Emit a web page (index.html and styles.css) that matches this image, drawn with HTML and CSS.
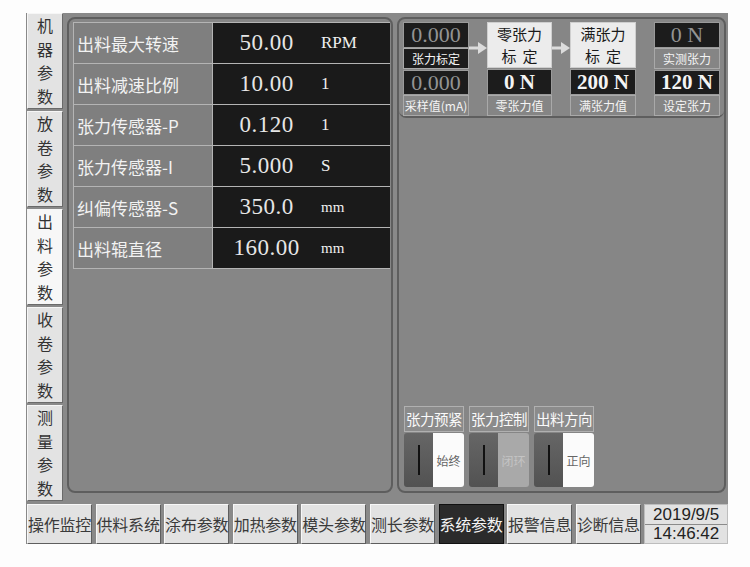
FILE: index.html
```html
<!DOCTYPE html>
<html>
<head>
<meta charset="utf-8">
<link rel="stylesheet" href="styles.css">
</head>
<body>
<div class="screen">
  <div class="main">
    <div class="side">
      <div class="vtab"><span>机</span><span>器</span><span>参</span><span>数</span></div>
      <div class="vtab"><span>放</span><span>卷</span><span>参</span><span>数</span></div>
      <div class="vtab active"><span>出</span><span>料</span><span>参</span><span>数</span></div>
      <div class="vtab"><span>收</span><span>卷</span><span>参</span><span>数</span></div>
      <div class="vtab"><span>测</span><span>量</span><span>参</span><span>数</span></div>
    </div>
    <div class="panels">
      <div class="panel left">
        <div class="ptable">
          <div class="lbl">出料最大转速</div><div class="val"><span class="num">50.00</span><span class="unit">RPM</span></div>
          <div class="lbl">出料减速比例</div><div class="val"><span class="num">10.00</span><span class="unit">1</span></div>
          <div class="lbl">张力传感器-P</div><div class="val"><span class="num">0.120</span><span class="unit">1</span></div>
          <div class="lbl">张力传感器-I</div><div class="val"><span class="num">5.000</span><span class="unit">S</span></div>
          <div class="lbl">纠偏传感器-S</div><div class="val"><span class="num">350.0</span><span class="unit small">mm</span></div>
          <div class="lbl">出料辊直径</div><div class="val"><span class="num">160.00</span><span class="unit small">mm</span></div>
        </div>
      </div>
      <div class="panel right">
        <div class="calib">
          <div class="col">
            <div class="box grey">0.000</div>
            <div class="tag dark">张力标定</div>
            <div class="box grey b2">0.000</div>
            <div class="tag">采样值(mA)</div>
          </div>
          <div class="arrow"><svg width="18" height="12" viewBox="0 0 18 12"><rect x="0" y="4.5" width="10" height="3" fill="#dcdcdc"/><polygon points="9,0 18,6 9,12" fill="#dcdcdc"/></svg></div>
          <div class="col">
            <div class="btn"><div>零张力</div><div class="sp">标定</div></div>
            <div class="box bold">0 N</div>
            <div class="tag">零张力值</div>
          </div>
          <div class="arrow"><svg width="18" height="12" viewBox="0 0 18 12"><rect x="0" y="4.5" width="10" height="3" fill="#dcdcdc"/><polygon points="9,0 18,6 9,12" fill="#dcdcdc"/></svg></div>
          <div class="col">
            <div class="btn"><div>满张力</div><div class="sp">标定</div></div>
            <div class="box bold">200 N</div>
            <div class="tag">满张力值</div>
          </div>
          <div class="spacer"></div>
          <div class="col">
            <div class="box grey">0 N</div>
            <div class="tag">实测张力</div>
            <div class="box bold b2">120 N</div>
            <div class="tag">设定张力</div>
          </div>
        </div>
        <div class="toggles">
          <div class="tg">
            <div class="tg-lbl">张力预紧</div>
            <div class="tg-sw"><div class="knob"><span class="bar"></span></div><div class="state on">始终</div></div>
          </div>
          <div class="tg">
            <div class="tg-lbl">张力控制</div>
            <div class="tg-sw"><div class="knob"><span class="bar"></span></div><div class="state off">闭环</div></div>
          </div>
          <div class="tg">
            <div class="tg-lbl">出料方向</div>
            <div class="tg-sw"><div class="knob"><span class="bar"></span></div><div class="state on">正向</div></div>
          </div>
        </div>
      </div>
    </div>
  </div>
  <div class="bottom">
    <div class="htab">操作监控</div>
    <div class="htab">供料系统</div>
    <div class="htab">涂布参数</div>
    <div class="htab">加热参数</div>
    <div class="htab">模头参数</div>
    <div class="htab">测长参数</div>
    <div class="htab active">系统参数</div>
    <div class="htab">报警信息</div>
    <div class="htab">诊断信息</div>
    <div class="date"><div class="d1">2019/9/5</div><div class="d2">14:46:42</div></div>
  </div>
</div>
</body>
</html>
```
FILE: styles.css
```css
* { box-sizing: border-box; }
body {
  margin: 0;
  background: #fdfdfd;
  font-family: "Noto Sans CJK SC", "Liberation Sans", sans-serif;
}
.screen {
  width: 702px;
  height: 531px;
  margin: 13px 0 0 26px;
  background: #898989;
  display: flex;
  flex-direction: column;
}
.main { display: flex; height: 490px; }
.side {
  width: 37px;
  padding-left: 1px;
  display: flex;
  flex-direction: column;
  gap: 2px;
}
.vtab {
  height: 96px;
  background: #e3e3e3;
  border: 1px solid;
  border-color: #f6f6f6 #6a6a6a #6a6a6a #f6f6f6;
  color: #333;
  font-size: 16px;
  text-align: center;
  display: flex;
  flex-direction: column;
  align-items: center;
  justify-content: center;
}
.vtab span { display: block; height: 23.5px; line-height: 23.5px; }
.vtab.active { background: #f7f7f7; }
.panels {
  display: flex;
  gap: 4px;
  padding: 4px 0 0 4px;
}
.panel {
  height: 476px;
  border: 2px solid #5e5e5e;
  border-radius: 8px;
  background: #868686;
}
.panel.left { width: 326px; padding: 3px 0 0 4px; }
.panel.right { width: 329px; display: flex; flex-direction: column; }

.ptable {
  width: 317px;
  display: grid;
  grid-template-columns: 138px 177px;
  grid-auto-rows: 40px;
  gap: 1px;
  padding: 1px;
  background: #b4b4b4;
}
.lbl {
  background: #7f7f7f;
  color: #f2f2f2;
  font-size: 17px;
  padding-left: 3px;
  display: flex;
  align-items: center;
  white-space: nowrap;
}
.val {
  background: #1a1a1a;
  display: flex;
  align-items: center;
  color: #e6e6e6;
  font-family: "Liberation Serif", serif;
}
.num {
  width: 107px;
  text-align: center;
  font-size: 23px;
  letter-spacing: 0.5px;
}
.unit { font-size: 17px; margin-left: 1px; color: #f0f0f0; }
.unit.small { font-size: 15px; }

.calib {
  display: flex;
  padding: 3px 0 1px 4px;
  border-bottom: 2px solid #5e5e5e;
  border-radius: 0 0 7px 7px;
  height: 99px;
}
.col { width: 66px; display: flex; flex-direction: column; }
.col:nth-child(3) { width: 65px; }
.arrow, .spacer { width: 18px; }
.arrow { padding-top: 20px; }
.arrow svg { display: block; }
.box {
  height: 26px;
  background: #1c1c1c;
  border: 1px solid #9a9a9a;
  color: #f4f4f4;
  font-family: "Liberation Serif", serif;
  font-size: 22px;
  line-height: 24px;
  text-align: center;
}
.box.b2 { height: 25px; margin-top: 1px; line-height: 23px; }
.box.grey { color: #939393; }
.box.bold { font-weight: bold; font-size: 21px; }
.tag {
  height: 21px;
  background: #858585;
  border: 1px solid #a9a9a9;
  color: #f4f4f4;
  font-size: 12px;
  line-height: 19px;
  text-align: center;
  white-space: nowrap;
}
.tag.dark { background: #1c1c1c; height: 22px; }
.btn {
  height: 48px;
  margin-bottom: 1px;
  background: #ececec;
  border: 1px solid #cfcfcf;
  color: #1a1a1a;
  font-size: 15px;
  text-align: center;
  display: flex;
  flex-direction: column;
  justify-content: center;
}
.btn div { height: 22px; line-height: 22px; }
.btn .sp { letter-spacing: 6px; padding-left: 6px; }

.toggles {
  margin-top: auto;
  display: flex;
  gap: 5px;
  padding: 0 0 4px 5px;
}
.tg { width: 60px; display: flex; flex-direction: column; gap: 1px; }
.tg-lbl {
  height: 26px;
  border: 1px solid #b0b0b0;
  background: #8b8b8b;
  color: #fafafa;
  font-size: 14.5px;
  line-height: 24px;
  text-align: center;
  white-space: nowrap;
  letter-spacing: -0.5px;
}
.tg-sw {
  height: 54px;
  display: flex;
  border-radius: 3px;
  overflow: hidden;
}
.knob {
  width: 29px;
  background: linear-gradient(#666, #525252);
  display: flex;
  align-items: center;
  justify-content: center;
}
.bar { width: 2px; height: 30px; background: #111; }
.state {
  flex: 1;
  font-size: 12px;
  display: flex;
  align-items: center;
  justify-content: center;
}
.state.on { background: #fbfbfb; color: #666; }
.state.off { background: #a9a9a9; color: #c4c4c4; }

.bottom {
  margin-top: 1px;
  height: 40px;
  display: flex;
  gap: 3.6px;
  padding-left: 1px;
}
.htab {
  width: 65px;
  background: #e2e2e2;
  border: 1px solid;
  border-color: #f7f7f7 #5e5e5e #5e5e5e #f7f7f7;
  color: #3a3a3a;
  font-size: 16px;
  display: flex;
  align-items: center;
  justify-content: center;
  white-space: nowrap;
  letter-spacing: -0.2px;
}
.htab.active {
  background: #2b2b2b;
  color: #f4f4f4;
  border-color: #111;
}
.date {
  width: 84px;
  background: #e2e2e2;
  border: 1px solid #bdbdbd;
  display: flex;
  flex-direction: column;
  font-family: "Liberation Sans", sans-serif;
  font-size: 17px;
  color: #222;
  text-align: center;
}
.d1 { height: 20px; line-height: 20px; border-bottom: 1px solid #8a8a8a; }
.d2 { flex: 1; line-height: 18px; }
```
